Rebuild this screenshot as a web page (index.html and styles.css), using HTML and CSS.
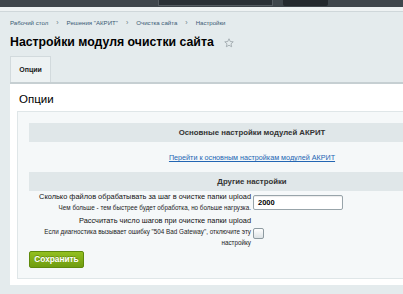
FILE: index.html
```html
<!DOCTYPE html>
<html lang="ru">
<head>
<meta charset="utf-8">
<link rel="stylesheet" href="styles.css">
</head>
<body>
<div class="topbar">
  <div class="tb-search"></div>
  <div class="tb-btn"></div>
</div>
<div class="topline"></div>
<div class="page">
  <nav class="crumbs">
    <a>Рабочий стол</a><span class="sep">›</span>
    <a>Решения "АКРИТ"</a><span class="sep">›</span>
    <a>Очистка сайта</a><span class="sep">›</span>
    <a>Настройки</a>
  </nav>
  <h1 class="title">Настройки модуля очистки сайта<svg class="star" viewBox="0 0 20 20" width="10" height="10"><path d="M10 1.5l2.5 5.5 6 .6-4.5 4 1.3 5.9L10 14.5l-5.3 3 1.3-5.9-4.5-4 6-.6z" fill="none" stroke="#9aa3a8" stroke-width="1.6" stroke-linejoin="round"/></svg></h1>
  <div class="tabs"><div class="tab">Опции</div></div>
  <div class="panel">
    <h2 class="panel-title">Опции</h2>
    <div class="box">
      <div class="table">
        <div class="head">Основные настройки модулей АКРИТ</div>
        <div class="linkrow"><a class="link">Перейти к основным настройкам модулей АКРИТ</a></div>
        <div class="head">Другие настройки</div>
        <div class="row">
          <div class="label">Сколько файлов обрабатывать за шаг в очистке папки upload<br><small>Чем больше - тем быстрее будет обработка, но больше нагрузка.</small></div>
          <div class="field"><div class="input">2000</div></div>
        </div>
        <div class="row row2">
          <div class="label">Рассчитать число шагов при очистке папки upload<br><small>Если диагностика вызывает ошибку "504 Bad Gateway", отключите эту настройку</small></div>
          <div class="field"><div class="check"></div></div>
        </div>
      </div>
      <div class="actions"><button class="save">Сохранить</button></div>
    </div>
  </div>
</div>
</body>
</html>
```
FILE: styles.css
```css
html, body { margin: 0; padding: 0; overflow: hidden; }
body {
  width: 403px; height: 294px;
  background: #e4ebed;
  font-family: "Liberation Sans", Arial, sans-serif;
  color: #000;
}
.topbar {
  height: 7px;
  background: #3f464c;
  display: flex;
  gap: 10px;
  padding-left: 158px;
}
.tb-search { width: 115px; height: 6px; background: #2a3036; border: 1px solid #555c62; border-top: 0; box-sizing: border-box; }
.tb-btn { width: 45px; height: 6px; background: #24292e; border-radius: 0 0 2px 2px; }
.topline { height: 4px; background: #eef2f3; border-bottom: 1px solid #cfd7da; }
.page { width: 484px; padding-left: 10px; }
.crumbs {
  font-size: 6.1px; color: #3a5a74;
  padding-top: 4px; height: 12px;
  display: flex; align-items: center;
}
.crumbs .sep { margin: 0 8px; color: #6b7b86; font-size: 7px; }
.title {
  margin: 5px 0 0; font-size: 12.3px; font-weight: bold; color: #000;
  height: 18px; line-height: 18px;
  display: flex; align-items: center;
}
.star { margin-left: 10px; margin-top: 1px; }
.tabs { margin-top: 5px; height: 26px; display: flex; align-items: flex-end; border-bottom: 2px solid #c6cfd2; }
.tab {
  height: 26px; width: 41px; box-sizing: border-box;
  background: #edf2f3; border: 1px solid #d2dadd; border-bottom: 0;
  font-size: 7px; font-weight: bold; color: #1a1a1a;
  display: flex; align-items: center; justify-content: center;
}
.panel { background: #fff; padding: 8px 7px 6px; }
.panel-title { margin: 0 0 5px 2px; font-size: 11.5px; font-weight: normal; color: #000; height: 14px; line-height: 14px; }
.box { background: #f5f8f9; border: 1px solid #dfe6e8; padding: 11px 11px 10px; }
.table { display: flex; flex-direction: column; }
.head {
  background: #e0e7e9; height: 19px; text-align: center;
  font-size: 7.8px; font-weight: bold; color: #333;
  line-height: 19px;
}
.linkrow { height: 30px; box-sizing: border-box; padding-top: 8px; line-height: 10px; text-align: center; }
.link { font-size: 7.2px; color: #2366b3; text-decoration: underline; }
.row { display: grid; grid-template-columns: 1fr 1fr; gap: 2px; }
.row2 { padding-top: 1px; }
.label { text-align: right; font-size: 7.4px; color: #111; line-height: 11px; }
.label small { font-size: 6.3px; line-height: 10.5px; color: #222; }
.field { display: flex; align-items: flex-start; }
.input {
  width: 90px; height: 15px; box-sizing: border-box; margin-top: 4px;
  border: 1px solid #98a4aa; border-radius: 2px; background: #fff;
  font-size: 7.5px; font-weight: bold; padding-left: 4px; line-height: 13px;
  box-shadow: inset 0 1px 1px rgba(0,0,0,0.08);
}
.check {
  width: 9px; height: 9px; margin-top: 13px; margin-left: 0;
  border: 1px solid #8d9aa0; border-radius: 2px;
  background: linear-gradient(#fff, #dde3e6);
}
.actions { padding-top: 2px; }
.save {
  display: block;
  width: 55px; height: 17px; padding: 0;
  border: 1px solid #5f8a0c; border-radius: 2px;
  background: linear-gradient(#93c020, #6f9c10);
  color: #fff; font-family: inherit; font-size: 8.3px; font-weight: bold;
  text-shadow: 0 -1px 0 rgba(0,0,0,0.25);
}
```
